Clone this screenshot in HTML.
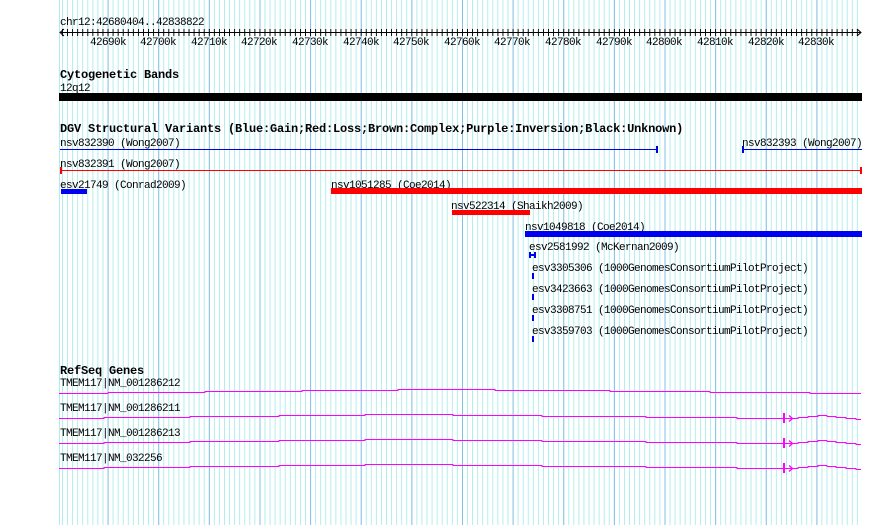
<!DOCTYPE html>
<html><head><meta charset="utf-8"><style>
html,body{margin:0;padding:0;background:#fff;width:890px;height:525px;overflow:hidden}
svg{display:block}
text{font-family:"Liberation Mono",monospace;font-size:11px;letter-spacing:-0.6px;fill:#000}
.b{font-weight:bold;font-size:12px;letter-spacing:-0.2px}
</style></head><body>
<svg width="890" height="525" viewBox="0 0 890 525" xmlns="http://www.w3.org/2000/svg" shape-rendering="crispEdges">
<defs>
<pattern id="mn" patternUnits="userSpaceOnUse" x="62" y="0" width="5.063" height="525"><rect x="0" y="0" width="1" height="525" fill="#aeeced"/></pattern>
<pattern id="mj" patternUnits="userSpaceOnUse" x="107.6" y="0" width="50.63" height="525"><rect x="0" y="0" width="1" height="525" fill="#86bfe8"/></pattern>
<pattern id="tk" patternUnits="userSpaceOnUse" x="62" y="0" width="5.063" height="40"><rect x="0" y="29" width="1" height="7" fill="#000"/></pattern>
</defs>
<rect x="59" y="0" width="1" height="525" fill="#aeeced"/>
<rect x="60" y="0" width="802" height="525" fill="url(#mn)"/>
<rect x="60" y="0" width="802" height="525" fill="url(#mj)"/>

<text x="60" y="25">chr12:42680404..42838822</text>
<rect x="61" y="32" width="800" height="1" fill="#000"/>
<rect x="62" y="28" width="798" height="9" fill="url(#tk)"/>
<path d="M64 29 L60 32.5 L64 36 M857 29 L861 32.5 L857 36" stroke="#000" fill="none" shape-rendering="auto"/>
<g text-anchor="middle">
<text x="108" y="45">42690k</text><text x="158" y="45">42700k</text><text x="209" y="45">42710k</text><text x="259" y="45">42720k</text><text x="310" y="45">42730k</text><text x="361" y="45">42740k</text><text x="411" y="45">42750k</text><text x="462" y="45">42760k</text><text x="512" y="45">42770k</text><text x="563" y="45">42780k</text><text x="614" y="45">42790k</text><text x="664" y="45">42800k</text><text x="715" y="45">42810k</text><text x="766" y="45">42820k</text><text x="816" y="45">42830k</text>
</g>

<text class="b" x="60" y="78">Cytogenetic Bands</text>
<text x="60" y="91">12q12</text>
<rect x="59" y="93" width="803" height="8" fill="#000"/>

<text class="b" x="60" y="132">DGV Structural Variants (Blue:Gain;Red:Loss;Brown:Complex;Purple:Inversion;Black:Unknown)</text>
<text x="60" y="146">nsv832390 (Wong2007)</text>
<rect x="60" y="149" width="597" height="1" fill="#0000e0"/>
<rect x="656" y="146" width="2" height="7" fill="#0000e0"/>
<text x="742" y="146">nsv832393 (Wong2007)</text>
<rect x="743" y="149" width="119" height="1" fill="#0000e0"/>
<rect x="742" y="146" width="2" height="7" fill="#0000e0"/>
<text x="60" y="167">nsv832391 (Wong2007)</text>
<rect x="60" y="170" width="802" height="1" fill="#f00"/>
<rect x="60" y="167" width="2" height="7" fill="#f00"/>
<rect x="860" y="167" width="2" height="7" fill="#f00"/>
<text x="60" y="188">esv21749 (Conrad2009)</text>
<rect x="61" y="189" width="26" height="5" fill="#0000f0"/>
<text x="331" y="188">nsv1051285 (Coe2014)</text>
<rect x="331" y="188" width="531" height="6" fill="#f00"/>
<text x="451" y="209">nsv522314 (Shaikh2009)</text>
<rect x="452" y="210" width="78" height="5" fill="#f00"/>
<text x="525" y="230">nsv1049818 (Coe2014)</text>
<rect x="525" y="231" width="337" height="6" fill="#0000f0"/>
<text x="529" y="250">esv2581992 (McKernan2009)</text>
<path d="M530 252v6M535 252v6M530 255h5" stroke="#0000f0" stroke-width="2" fill="none"/>
<text x="532" y="271">esv3305306 (1000GenomesConsortiumPilotProject)</text>
<rect x="532" y="273" width="2" height="6" fill="#0000f0"/>
<text x="532" y="292">esv3423663 (1000GenomesConsortiumPilotProject)</text>
<rect x="532" y="294" width="2" height="6" fill="#0000f0"/>
<text x="532" y="313">esv3308751 (1000GenomesConsortiumPilotProject)</text>
<rect x="532" y="315" width="2" height="6" fill="#0000f0"/>
<text x="532" y="334">esv3359703 (1000GenomesConsortiumPilotProject)</text>
<rect x="532" y="336" width="2" height="6" fill="#0000f0"/>

<text class="b" x="60" y="374">RefSeq Genes</text>
<g fill="none" stroke="#f0f" stroke-width="1">
<path d="M59 393.5H108V392.5H205V391.5H302V390.5H398V389.5H495V390.5H610V391.5H710V392.5H810V393.5H861"/>
<path d="M59 418.5H104V417.5H190V416.5H279V415.5H365V414.5H453V415.5H542V416.5H646V417.5H737V418.5H784"/>
<path d="M59 443.5H104V442.5H190V441.5H279V440.5H365V439.5H453V440.5H542V441.5H646V442.5H737V443.5H784"/>
<path d="M59 468.5H104V467.5H190V466.5H279V465.5H365V464.5H453V465.5H542V466.5H646V467.5H737V468.5H784"/>
</g>
<text x="60" y="386">TMEM117|NM_001286212</text>
<text x="60" y="411">TMEM117|NM_001286211</text>
<text x="60" y="436">TMEM117|NM_001286213</text>
<text x="60" y="461">TMEM117|NM_032256</text>
<g id="tail" fill="none" stroke="#f0f">
<path d="M784 418.5H798V417.5H808V416.5H818V415.5H827V416.5H836V417.5H846V418.5H856V419.5H861"/>
<rect x="783" y="413" width="2" height="10" fill="#f0f" stroke="none"/>
<path d="M789 415.5L792.5 418.5L789 421.5" stroke-width="1.3" shape-rendering="auto"/>
</g>
<use href="#tail" y="25"/>
<use href="#tail" y="50"/>
</svg>
</body></html>
